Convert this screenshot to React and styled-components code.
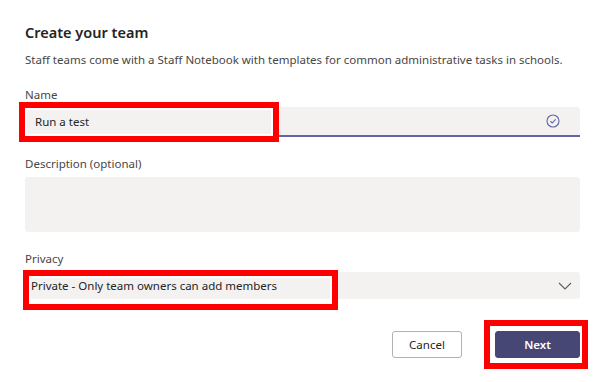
import React from "react";
import styled, { createGlobalStyle } from "styled-components";

const GlobalStyle = createGlobalStyle`
  html, body {
    margin: 0;
    padding: 0;
    background: #ffffff;
  }
  body {
    font-family: "Noto Sans", "Open Sans", sans-serif;
    color: #252423;
  }
`;

const Dialog = styled.div`
  width: 600px;
  height: 382px;
  padding: 22px 20px 0 25px;
  box-sizing: border-box;
  display: flex;
  flex-direction: column;
`;

const Title = styled.h1`
  margin: 0;
  font-size: 14.5px;
  line-height: 20px;
  font-weight: 600;
  color: #252423;
`;

const Intro = styled.p`
  margin: 10px 0 0;
  font-size: 11.5px;
  line-height: 16px;
  color: #484644;
  white-space: nowrap;
`;

const Field = styled.div`
  display: flex;
  flex-direction: column;
  margin-top: ${(p) => p.$top}px;
`;

const Label = styled.label`
  font-size: 11.5px;
  line-height: 16px;
  color: #484644;
  margin-bottom: ${(p) => p.$gap}px;
`;

const Box = styled.div`
  position: relative;
  display: flex;
  align-items: center;
  justify-content: space-between;
  height: ${(p) => p.$height}px;
  padding: 0 ${(p) => p.$padRight}px 0 ${(p) => p.$padLeft}px;
  background: #f3f2f1;
  border-radius: ${(p) => (p.$underline ? "3px 3px 0 0" : "3px")};
  border-bottom: ${(p) => (p.$underline ? "2px solid #6264a7" : "none")};
  box-sizing: border-box;
  font-size: 11.5px;
  color: #252423;
`;

const Marker = styled.div`
  position: absolute;
  left: ${(p) => p.$left}px;
  top: ${(p) => p.$top}px;
  width: ${(p) => p.$width}px;
  height: ${(p) => p.$height}px;
  border: 6px solid #ff0000;
  box-shadow: inset 0 0 0 2px #ffffff;
  box-sizing: border-box;
  pointer-events: none;
`;

const Footer = styled.div`
  display: flex;
  justify-content: flex-end;
  gap: 33px;
  margin-top: 32px;
`;

const Button = styled.button`
  position: relative;
  width: ${(p) => p.$width}px;
  height: 27px;
  border-radius: 3px;
  font-family: "Noto Sans", "Open Sans", sans-serif;
  font-size: 11.5px;
  font-weight: ${(p) => (p.$primary ? 600 : 400)};
  color: ${(p) => (p.$primary ? "#ffffff" : "#252423")};
  background: ${(p) => (p.$primary ? "#464775" : "#ffffff")};
  border: 1px solid ${(p) => (p.$primary ? "#464775" : "#b3b0ad")};
  padding: 0;
`;

const CheckIcon = () => (
  <svg width="14" height="14" viewBox="0 0 14 14">
    <circle cx="7" cy="7" r="6" fill="none" stroke="#6264a7" strokeWidth="1.1" />
    <path d="M4.4 7.2 L6.2 9 L9.6 5.3" fill="none" stroke="#6264a7" strokeWidth="1.1" />
  </svg>
);

const Chevron = () => (
  <svg width="14" height="8" viewBox="0 0 14 8">
    <path d="M1 1 L7 7 L13 1" fill="none" stroke="#605e5c" strokeWidth="1.1" />
  </svg>
);

const App = () => {
  return (
    <>
      <GlobalStyle />
      <Dialog>
        <Title>Create your team</Title>
        <Intro>
          Staff teams come with a Staff Notebook with templates for common administrative tasks in schools.
        </Intro>

        <Field $top={19}>
          <Label $gap={4}>Name</Label>
          <Box $height={30} $padLeft={10} $padRight={20} $underline>
            <span>Run a test</span>
            <CheckIcon />
            <Marker $left={-6} $top={-5} $width={260} $height={40} />
          </Box>
        </Field>

        <Field $top={19}>
          <Label $gap={5}>Description (optional)</Label>
          <Box $height={55} $padLeft={10} $padRight={10} />
        </Field>

        <Field $top={19}>
          <Label $gap={5}>Privacy</Label>
          <Box $height={27} $padLeft={6} $padRight={8}>
            <span>Private - Only team owners can add members</span>
            <Chevron />
            <Marker $left={-2} $top={-2} $width={315} $height={40} />
          </Box>
        </Field>

        <Footer>
          <Button $width={70}>Cancel</Button>
          <Button $width={85} $primary>
            Next
            <Marker $left={-12} $top={-12} $width={104} $height={49} />
          </Button>
        </Footer>
      </Dialog>
    </>
  );
};

export default App;
